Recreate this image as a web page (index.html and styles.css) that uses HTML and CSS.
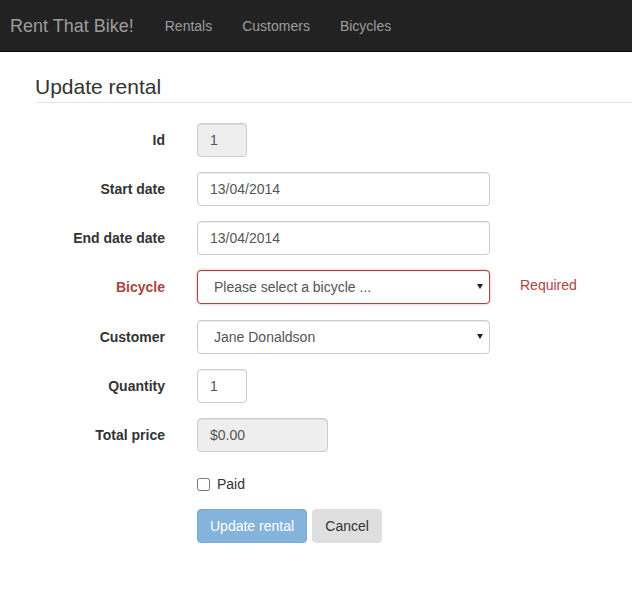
FILE: index.html
```html
<!DOCTYPE html>
<html lang="en">
<head>
<meta charset="utf-8">
<title>Rent That Bike!</title>
<link rel="stylesheet" href="styles.css">
</head>
<body>
<nav class="navbar">
  <a class="brand" href="#">Rent That Bike!</a>
  <a class="nav-link" href="#">Rentals</a>
  <a class="nav-link" href="#">Customers</a>
  <a class="nav-link" href="#">Bicycles</a>
</nav>
<main class="page">
  <form class="form">
    <div class="legend">Update rental</div>
    <div class="group">
      <label class="label">Id</label>
      <div class="control"><input class="input w-small" type="text" value="1" disabled></div>
    </div>
    <div class="group">
      <label class="label">Start date</label>
      <div class="control"><input class="input w-full" type="text" value="13/04/2014"></div>
    </div>
    <div class="group">
      <label class="label">End date date</label>
      <div class="control"><input class="input w-full" type="text" value="13/04/2014"></div>
    </div>
    <div class="group group-error">
      <label class="label label-error">Bicycle</label>
      <div class="control">
        <div class="select-wrap w-full">
          <select class="input select select-error">
            <option>Please select a bicycle ...</option>
          </select>
        </div>
        <span class="help">Required</span>
      </div>
    </div>
    <div class="group">
      <label class="label">Customer</label>
      <div class="control">
        <div class="select-wrap w-full">
          <select class="input select">
            <option>Jane Donaldson</option>
          </select>
        </div>
      </div>
    </div>
    <div class="group">
      <label class="label">Quantity</label>
      <div class="control"><input class="input w-small" type="text" value="1"></div>
    </div>
    <div class="group">
      <label class="label">Total price</label>
      <div class="control"><input class="input w-mid" type="text" value="$0.00" disabled></div>
    </div>
    <div class="group group-check">
      <span class="label"></span>
      <div class="control">
        <label class="check"><input type="checkbox" class="checkbox"> Paid</label>
      </div>
    </div>
    <div class="group">
      <span class="label"></span>
      <div class="control buttons">
        <button type="button" class="btn btn-primary">Update rental</button>
        <button type="button" class="btn btn-default">Cancel</button>
      </div>
    </div>
  </form>
</main>
</body>
</html>
```

FILE: styles.css
```css
* { box-sizing: border-box; }
html, body { margin: 0; padding: 0; }
body {
  font-family: "Liberation Sans", Arial, sans-serif;
  font-size: 14px;
  line-height: 20px;
  color: #333;
  background: #fff;
}
.navbar {
  display: flex;
  align-items: center;
  height: 52px;
  background: #222;
  border-bottom: 1px solid #080808;
  padding-left: 10px;
}
.brand {
  font-size: 18px;
  line-height: 20px;
  color: #9d9d9d;
  text-decoration: none;
  padding: 15px 16px 15px 0;
}
.nav-link {
  font-size: 14px;
  line-height: 20px;
  color: #9d9d9d;
  text-decoration: none;
  padding: 15px;
}
.page {
  padding-top: 20px;
  padding-left: 35px;
}
.legend {
  font-size: 21px;
  line-height: 30px;
  color: #333;
  border-bottom: 1px solid #e5e5e5;
  margin-bottom: 20px;
}
.group {
  display: flex;
  align-items: flex-start;
  margin-bottom: 15px;
}
.group-error { margin-bottom: 16px; }
.label {
  width: 130px;
  flex: none;
  text-align: right;
  font-weight: bold;
  padding-top: 7px;
  line-height: 20px;
  color: #333;
}
.label-error { color: #a94442; }
.control {
  margin-left: 32px;
  display: flex;
  align-items: flex-start;
}
.input {
  display: block;
  height: 34px;
  padding: 6px 12px;
  font-family: "Liberation Sans", Arial, sans-serif;
  font-size: 14px;
  line-height: 20px;
  color: #555;
  background: #fff;
  border: 1px solid #ccc;
  border-radius: 4px;
  box-shadow: inset 0 1px 1px rgba(0,0,0,.075);
  margin: 0;
}
.input:disabled { background: #eee; color: #555; opacity: 1; -webkit-text-fill-color: #555; }
.w-small { width: 50px; }
.w-mid { width: 131px; }
.w-full { width: 293px; }
.select-wrap { position: relative; }
.select {
  width: 100%;
  appearance: none;
  -webkit-appearance: none;
  padding-left: 16px;
}
.select-wrap::after {
  content: "";
  position: absolute;
  right: 7px;
  top: 14px;
  border-left: 3.5px solid transparent;
  border-right: 3.5px solid transparent;
  border-top: 5px solid #222;
}
.select-error {
  border-color: #a94442;
  box-shadow: inset 0 1px 1px rgba(0,0,0,.075), 0 0 3px rgba(169,68,66,.45);
}
.help {
  color: #a94442;
  margin-left: 30px;
  padding-top: 5px;
  line-height: 20px;
}
.group-check .control { padding-top: 7px; min-height: 27px; }
.group-check { margin-bottom: 15px; }
.check {
  display: flex;
  align-items: center;
  font-weight: normal;
  color: #333;
  line-height: 20px;
}
.checkbox {
  width: 13px;
  height: 13px;
  margin: 0 7px 0 0;
}
.buttons { gap: 5px; }
.btn {
  height: 34px;
  padding: 6px 12px;
  font-family: "Liberation Sans", Arial, sans-serif;
  font-size: 14px;
  line-height: 20px;
  border-radius: 4px;
  border: 1px solid transparent;
  cursor: pointer;
}
.btn-primary {
  background: #84b4dc;
  border-color: #78a9d3;
  color: #fff;
}
.btn-default {
  background: #dfdfdf;
  border-color: #dfdfdf;
  color: #333;
  width: 70px;
}
```
